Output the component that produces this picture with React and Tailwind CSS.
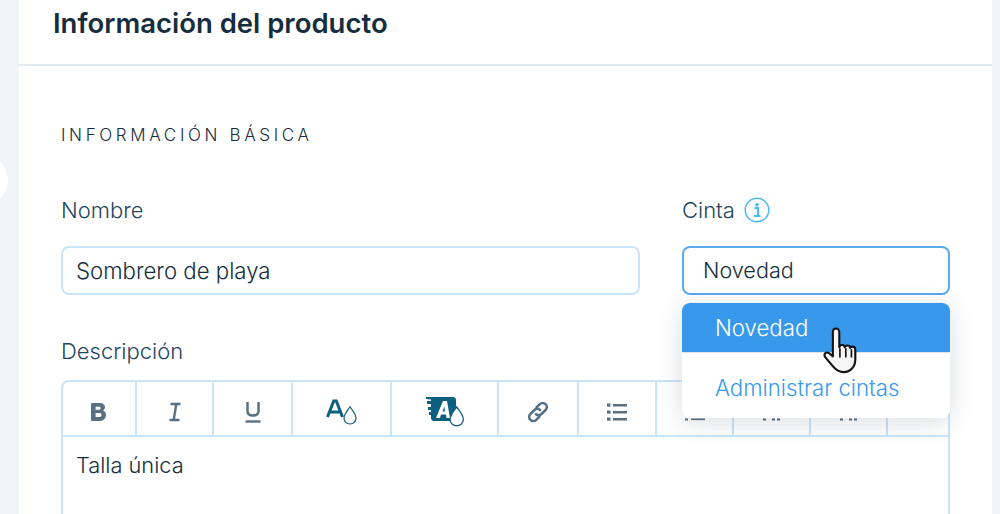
const font = { fontFamily: '"Inter", "Liberation Sans", sans-serif' };

function Cell({ w, children }) {
  return (
    <div className={`${w} flex h-full shrink-0 items-center justify-center border-r-2 border-[#c9e5fb] pt-[7px] last:border-r-0`}>
      {children}
    </div>
  );
}

const Bold = () => (
  <svg width="18" height="20" viewBox="0 0 18 20"><path fillRule="evenodd" fill="#577083" d="M1 2c0-.6.4-1 1-1h8c3 0 5 1.600 5 4.300 0 1.500-.8 2.800-2 3.400 1.900.6 3 2.100 3 4.100C16 15.700 13.800 19 10.500 19H2c-.6 0-1-.4-1-1V2Zm4.600 2.700v3.100h3.300c1.100 0 1.800-.6 1.800-1.550s-.7-1.550-1.800-1.550H5.600Zm0 6.300v4.100h3.800c1.300 0 2.100-.8 2.100-2.050S10.700 11 9.400 11H5.600Z" /></svg>
);
const Italic = () => (
  <svg width="14" height="20" viewBox="0 0 14 20" fill="none" stroke="#577083" strokeWidth="2.400"><path d="M2.500 2h10M1.500 18h10M8.300 2 5.700 18" /></svg>
);
const Under = () => (
  <svg width="18" height="22" viewBox="0 0 18 22" fill="none" stroke="#577083" strokeWidth="2.500"><path d="M3.500 1v9c0 3 2 4.500 5.500 4.500s5.500-1.500 5.500-4.500V1" /><path d="M1.500 20.500h15" strokeWidth="2.400" /></svg>
);
const Drop = ({ x, y, s = 1 }) => (
  <path transform={`translate(${x} ${y}) scale(${s})`} d="M7 0.800C5 4 1 8 1 12.200 1 15.600 3.700 18 7 18s6-2.400 6-5.800C13 8 9 4 7 .8Z" fill="#fff" stroke="#0d5f80" strokeWidth="1.200" />
);
const TextColor = () => (
  <svg width="32" height="26" viewBox="0 0 32 26" fill="none">
    <path d="M1.500 18 7.700 2h2.600L16.500 18M4 13h10" stroke="#0d5f80" strokeWidth="3" />
    <Drop x={17} y={7} s={1} />
  </svg>
);
const Highlight = () => (
  <svg width="40" height="32" viewBox="0 0 40 32">
    <path d="M1 1h28l2 2v22H8l-2-2v-4H4v-3h2v-2H3v-3h3V8H2V5h4V3.500L1 3V1Z" fill="#0d5f80" />
    <path d="M11 22 18 5h4l3 17h-3.500l-.5-3.500h-5L15 22h-4Zm6.500-6.500H20l-.6-5-1.900 5Z" fill="#fff" />
    <Drop x={24} y={10} s={1.100} />
  </svg>
);
const LinkIcon = () => (
  <svg width="24" height="24" viewBox="0 0 24 24" fill="none" stroke="#577083" strokeWidth="2.500" strokeLinecap="round">
    <path d="M10.500 7.500 13.800 4.200a4 4 0 0 1 5.800 0 4 4 0 0 1 0 5.800L15.500 14a4 4 0 0 1-5.600 0" />
    <path d="M13.500 16.500 10.200 19.800a4 4 0 0 1-5.800 0 4 4 0 0 1 0-5.800L8.500 10a4 4 0 0 1 5.600 0" />
  </svg>
);
const ListIcon = () => (
  <svg width="22" height="20" viewBox="0 0 22 20" fill="#577083">
    <rect x="1" y="1.500" width="3.500" height="3.200" /><rect x="1" y="8.500" width="3.500" height="3.200" /><rect x="1" y="15.500" width="3.500" height="3.200" />
    <rect x="7" y="2" width="14" height="2.500" /><rect x="7" y="9" width="14" height="2.500" /><rect x="7" y="16" width="14" height="2.500" />
  </svg>
);
const PeekLine = () => (
  <svg width="22" height="20" viewBox="0 0 22 20" fill="#577083">
    <rect x="1" y="16.500" width="3" height="2" /><rect x="7" y="16.500" width="14" height="1.600" />
  </svg>
);
const PeekDots = () => (
  <svg width="22" height="20" viewBox="0 0 22 20" fill="#577083">
    <rect x="2" y="16.500" width="3" height="2" /><rect x="11" y="16.500" width="3" height="2" /><rect x="16" y="16.500" width="3" height="2" />
  </svg>
);
const Hand = () => (
  <svg width="35" height="47" viewBox="1 6 29 40" className="absolute left-[823px] top-[327px]">
    <path
      d="M9 10.500c0-1.800 1.100-3.200 2.700-3.200S14.500 8.700 14.500 10.500v12.700c.2-1.200 1.100-1.900 2.300-1.900 1.300 0 2.200.8 2.400 2 .2-1 1.100-1.600 2.200-1.600 1.300 0 2.200.9 2.300 2.100.3-.7 1-1.100 1.900-1.100 1.500 0 2.500 1.100 2.500 2.700v8.200c0 6.300-4.200 10.800-9.900 10.800-4 0-6.500-1.800-9.300-5.100L3 32.300c-1.100-1.400-1.600-2.500-.8-3.700.9-1.300 2.600-1.200 4 0L9 31V10.500Z"
      fill="#f6f6f6" stroke="#111" strokeWidth="1.800" strokeLinejoin="round"
    />
    <path d="M15 24v8M20 24v8M24.800 25v7" stroke="#111" strokeWidth="1.400" fill="none" />
  </svg>
);

export default function App() {
  return (
    <div style={font} className="relative h-[514px] w-[1000px] overflow-hidden bg-[#f0f4f7] pl-[19px] pr-2 text-[#162d3d]">
      <div className="absolute left-[-50px] top-[155px] h-[50px] w-[58px] rounded-full bg-white" />
      <div className="h-full bg-white">
        <div className="flex h-[66px] items-start border-b-2 border-[#e3eaf0] pl-[34px]">
          <h1 className="mt-[4px] text-[27.500px] font-semibold leading-[38px] text-[#162d3d]">Información del producto</h1>
        </div>
        <div className="pl-[42px] pr-[42px]">
          <div className="mt-[58px] text-[17px] font-light leading-[22px] tracking-[3.650px] text-[#162d3d]">INFORMACIÓN BÁSICA</div>
          <div className="mt-[50px] flex gap-[42px]">
            <div className="w-[579px]">
              <div className="h-[28px] text-[22px] font-light leading-[28px] text-[#1f4560]">Nombre</div>
              <div className="mt-[22px] flex h-[49px] items-center rounded-lg border-2 border-[#c9e5fb] pl-[13px] text-[22.200px] font-light text-[#162d3d]">Sombrero de playa</div>
            </div>
            <div className="w-[268px]">
              <div className="flex h-[28px] items-center gap-[9px] text-[22px] font-light leading-[28px] text-[#1f4560]">
                Cinta
                <svg width="26" height="26" viewBox="0 0 26 26" fill="none">
                  <circle cx="13" cy="13" r="11.800" stroke="#4eb7f5" strokeWidth="1.500" />
                  <circle cx="13" cy="7.800" r="1.800" fill="#4eb7f5" />
                  <path d="M10.500 11.200h3.500v7.300M10 19h6.500" stroke="#4eb7f5" strokeWidth="2.200" />
                </svg>
              </div>
              <div className="mt-[22px] flex h-[49px] items-center rounded-lg border-2 border-[#5aaaf0] pl-[19px] text-[21.600px] font-light text-[#162d3d]">Novedad</div>
            </div>
          </div>
          <div className="mt-[42px] h-[28px] text-[22px] font-light leading-[28px] text-[#1f4560]">Descripción</div>
          <div className="mt-[15px] h-[200px] w-[889px] rounded-t-lg border-2 border-b-0 border-[#c9e5fb]">
            <div className="flex h-[55px] items-center border-b-2 border-[#c9e5fb]">
              <Cell w="w-[74px]"><Bold /></Cell>
              <Cell w="w-[77px]"><Italic /></Cell>
              <Cell w="w-[79px]"><Under /></Cell>
              <Cell w="w-[99px]"><TextColor /></Cell>
              <Cell w="w-[107px]"><Highlight /></Cell>
              <Cell w="w-[80px]"><LinkIcon /></Cell>
              <Cell w="w-[78px]"><ListIcon /></Cell>
              <Cell w="w-[77px]"><PeekLine /></Cell>
              <Cell w="w-[77px]"><PeekDots /></Cell>
              <Cell w="w-[77px]"><PeekDots /></Cell>
              <Cell w="w-[62px]"><span /></Cell>
            </div>
            <div className="pl-[13px] pt-[14px] text-[21.800px] font-light leading-[28px] text-[#162d3d]">Talla única</div>
          </div>
        </div>
      </div>
      <div className="absolute left-[682px] top-[303px] w-[268px] overflow-hidden rounded-lg bg-white text-[22.200px] font-light shadow-[0_4px_24px_rgba(22,45,61,0.16)]">
        <div className="flex h-[49px] items-center bg-[#3899ec] pl-[33px] pt-[1px] text-white">Novedad</div>
        <div className="h-[1px] bg-[#dfe5eb]" />
        <div className="flex h-[65px] items-center pt-[4px] pl-[33px] text-[#3899ec]">Administrar cintas</div>
      </div>
      <Hand />
    </div>
  );
}
